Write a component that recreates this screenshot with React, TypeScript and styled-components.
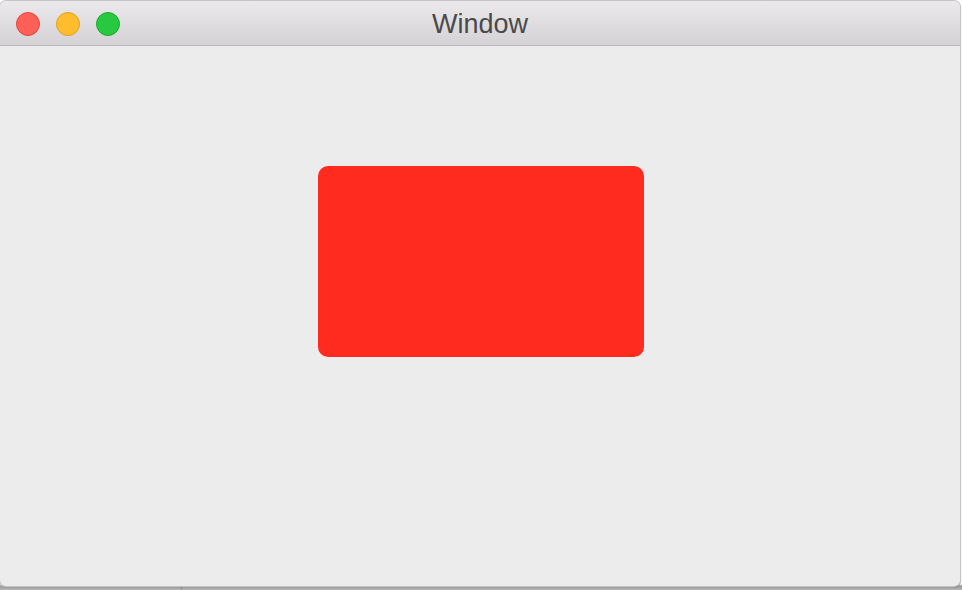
import React from 'react';
import styled, { createGlobalStyle } from 'styled-components';

const GlobalStyle = createGlobalStyle`
  html, body {
    margin: 0;
    padding: 0;
    background: #ffffff;
    overflow: hidden;
  }
`;

const Desktop = styled.div`
  position: relative;
  width: 962px;
  height: 590px;
  padding-top: 1px;
  box-sizing: border-box;
  background: linear-gradient(#ffffff 0, #ffffff 584px, #9a9a9a 586px, #b5b5b5 590px);
`;

const Seam = styled.div`
  position: absolute;
  left: 181px;
  top: 0;
  bottom: 0;
  width: 1px;
  background: #8a8a8a;
`;

const WindowFrame = styled.div`
  position: relative;
  width: 960px;
  height: 585px;
  display: flex;
  flex-direction: column;
  border-radius: 6px;
  overflow: hidden;
  background: #ececec;
  box-shadow: 0 0 0 1px #c4c4c4, 1px 1px 1px rgba(0, 0, 0, 0.35);
`;

const TitleBar = styled.div`
  position: relative;
  height: 44px;
  flex-shrink: 0;
  display: flex;
  align-items: center;
  background: linear-gradient(#ebe9eb, #d4d2d4);
  border-bottom: 1px solid #b8b8b8;
`;

const Lights = styled.div`
  display: flex;
  gap: 16px;
  padding-left: 16px;
  padding-top: 2px;
`;

const Light = styled.span<{ $fill: string; $edge: string }>`
  width: 24px;
  height: 24px;
  border-radius: 50%;
  box-sizing: border-box;
  background: ${(p) => p.$fill};
  border: 1px solid ${(p) => p.$edge};
`;

const Title = styled.div`
  position: absolute;
  left: 0;
  right: 0;
  top: 0;
  bottom: 0;
  display: flex;
  align-items: center;
  justify-content: center;
  padding-top: 2px;
  font-family: 'Liberation Sans', Arial, sans-serif;
  font-size: 27px;
  color: #4b4a4b;
  pointer-events: none;
`;

const Content = styled.div`
  flex: 1;
  padding-top: 120px;
  padding-left: 318px;
`;

const RedBox = styled.div`
  width: 326px;
  height: 191px;
  border-radius: 10px;
  background: #fe2b1e;
`;

const App: React.FC = () => (
  <>
    <GlobalStyle />
    <Desktop>
      <Seam />
      <WindowFrame>
        <TitleBar>
          <Lights>
            <Light $fill="#fe5f57" $edge="#e2463f" />
            <Light $fill="#febc2e" $edge="#e1a116" />
            <Light $fill="#28c840" $edge="#1aab29" />
          </Lights>
          <Title>Window</Title>
        </TitleBar>
        <Content>
          <RedBox />
        </Content>
      </WindowFrame>
    </Desktop>
  </>
);

export default App;
